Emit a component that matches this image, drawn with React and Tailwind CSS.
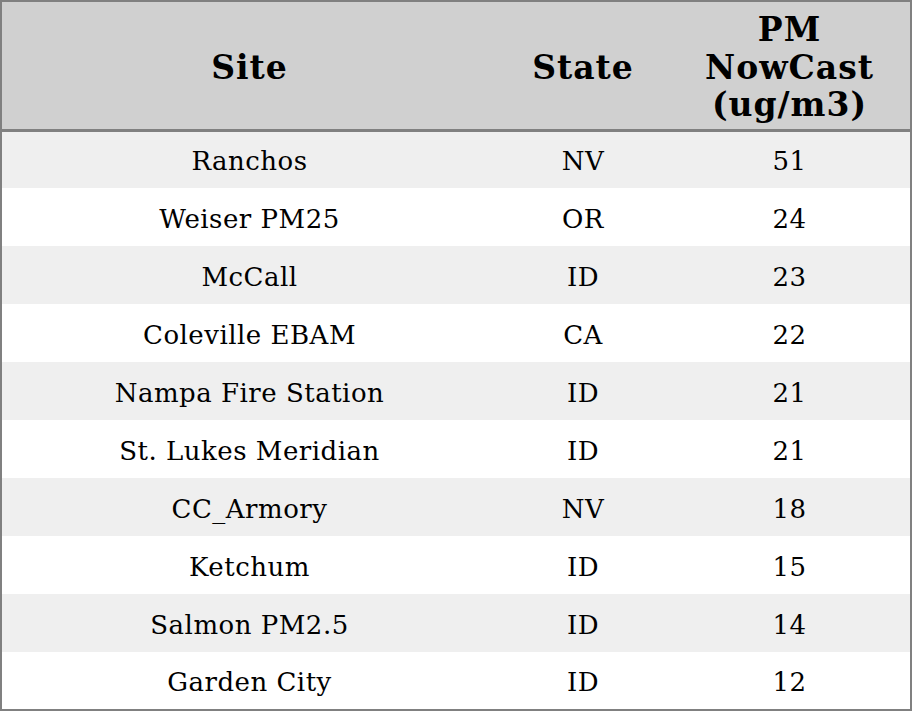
const rows = [
  { site: "Ranchos", state: "NV", pm: 51 },
  { site: "Weiser PM25", state: "OR", pm: 24 },
  { site: "McCall", state: "ID", pm: 23 },
  { site: "Coleville EBAM", state: "CA", pm: 22 },
  { site: "Nampa Fire Station", state: "ID", pm: 21 },
  { site: "St. Lukes Meridian", state: "ID", pm: 21 },
  { site: "CC_Armory", state: "NV", pm: 18 },
  { site: "Ketchum", state: "ID", pm: 15 },
  { site: "Salmon PM2.5", state: "ID", pm: 14 },
  { site: "Garden City", state: "ID", pm: 12 },
];

const App = () => {
  return (
    <div className="w-[912px] h-[711px] bg-white font-['DejaVu_Serif',serif] text-black">
      <table className="w-full border-2 border-[#808080] border-collapse table-fixed">
        <colgroup>
          <col className="w-[496px]" />
          <col className="w-[172px]" />
          <col />
        </colgroup>
        <thead>
          <tr className="h-[129px] bg-[#d0d0d0] border-b-[3px] border-[#808080] text-[33px] font-bold leading-[37.5px] tracking-[1px]">
            <th className="pt-[4px]">Site</th>
            <th className="pt-[4px]">State</th>
            <th className="pt-[4px]">
              PM
              <br />
              NowCast
              <br />
              (ug/m3)
            </th>
          </tr>
        </thead>
        <tbody>
          {rows.map((r, i) => (
            <tr
              key={r.site}
              className={`h-[58px] text-[26px] tracking-[0.5px] ${i % 2 === 0 ? "bg-[#efefef]" : "bg-white"}`}
            >
              <td className="text-center pt-[4px]">{r.site}</td>
              <td className="text-center pt-[4px]">{r.state}</td>
              <td className="text-center pt-[4px]">{r.pm}</td>
            </tr>
          ))}
        </tbody>
      </table>
    </div>
  );
};

export default App;
